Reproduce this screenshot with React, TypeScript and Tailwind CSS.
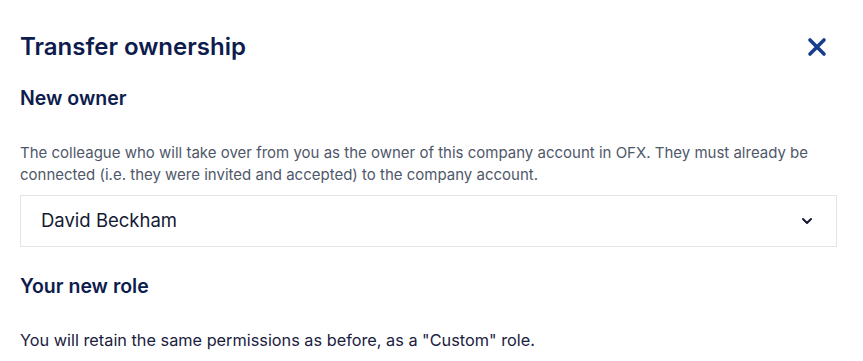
import { ChevronDown } from "lucide-react";

const App = () => {
    return (
        <div className="w-[863px] h-[361px] bg-white pl-5 pr-[26px] font-['Inter',sans-serif] overflow-hidden">
            <div className="flex items-center justify-between pt-[30px] h-[64px]">
                <h1 className="text-[24px] leading-[32px] font-semibold text-[#0e1c4d]">Transfer ownership</h1>
                <button className="mr-[10px] text-[#183d8c]">
                    <svg width="20" height="20" viewBox="0 0 20 20" fill="none" stroke="currentColor" strokeWidth="3.6" strokeLinecap="round">
                        <path d="M3 3 L17 17 M17 3 L3 17" />
                    </svg>
                </button>
            </div>
            <h2 className="mt-[20px] text-[19.5px] leading-[28px] font-semibold text-[#0e1c4d]">New owner</h2>
            <p className="mt-[30px] text-[15px] leading-[22px] text-[#4f5869]">
                The colleague who will take over from you as the owner of this company account in OFX. They must already be connected (i.e. they were invited and accepted) to the company account.
            </p>
            <div className="mt-[9px] h-[52px] border border-[#e3e4e8] flex items-center justify-between pl-5 pr-[21px]">
                <span className="text-[18.5px] text-[#141a33]">David Beckham</span>
                <ChevronDown className="w-4 h-4 text-[#141a33]" strokeWidth={3} />
            </div>
            <h2 className="mt-[25px] text-[19.5px] leading-[28px] font-semibold text-[#0e1c4d]">Your new role</h2>
            <p className="mt-[29px] text-[16.3px] leading-[22px] text-[#1a2140]">
                You will retain the same permissions as before, as a "Custom" role.
            </p>
        </div>
    )
}

export default App;
